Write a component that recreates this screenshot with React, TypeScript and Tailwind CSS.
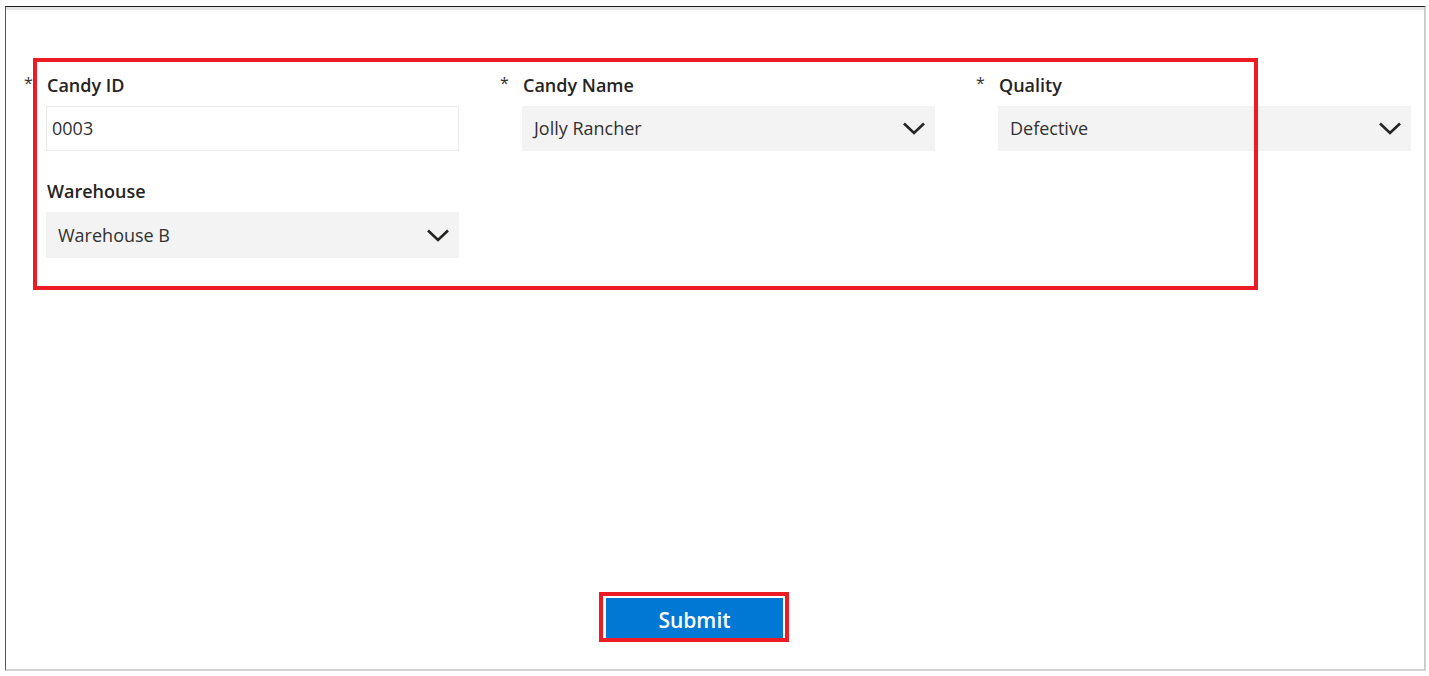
import { ReactNode } from "react";

function Chevron() {
  return (
    <svg width="22" height="13" viewBox="0 0 22 13" className="shrink-0">
      <polyline points="1,1.5 11,11 21,1.5" fill="none" stroke="#252423" strokeWidth="2.6" />
    </svg>
  );
}

function Field({ label, required, children }: { label: string; required?: boolean; children: ReactNode }) {
  return (
    <div className="flex flex-col">
      <div className="flex items-start h-[24px] mb-[9px]">
        <span className="w-[23px] text-[16px] leading-[20px] text-[#323130]">{required ? "*" : ""}</span>
        <span className="text-[18px] leading-[24px] font-semibold text-[#252423]">{label}</span>
      </div>
      <div className="ml-[22px] w-[413px]">{children}</div>
    </div>
  );
}

function Dropdown({ value, tall }: { value: string; tall?: boolean }) {
  return (
    <div
      className={`flex items-center justify-between bg-[#f3f3f3] pl-[12px] pr-[10px] ${tall ? "h-[46px]" : "h-[45px]"}`}
    >
      <span className="text-[18px] text-[#323130]">{value}</span>
      <Chevron />
    </div>
  );
}

export default function App() {
  return (
    <div className="w-[1429px] h-[676px] bg-white pt-[6px] pl-[5px] font-['Open_Sans',sans-serif]">
      <div className="relative w-[1421px] h-[665px] border-t border-l border-r-2 border-b-2 border-t-[#1e1e1e] border-l-[#555555] border-r-[#cccccc] border-b-[#d2d2d2]">
        <div className="h-[3px] bg-[#e6e6e6]" />

        <div className="pt-[63px] pl-[18px]">
          <div className="grid grid-cols-[435px_435px_435px] gap-x-[41px] gap-y-[28px]">
            <Field label="Candy ID" required>
              <div className="h-[45px] border border-[#ebebeb] bg-white flex items-center pl-[5px]">
                <span className="text-[18px] text-[#323130]">0003</span>
              </div>
            </Field>
            <Field label="Candy Name" required>
              <Dropdown value="Jolly Rancher" />
            </Field>
            <Field label="Quality" required>
              <Dropdown value="Defective" />
            </Field>
            <Field label="Warehouse">
              <Dropdown value="Warehouse B" tall />
            </Field>
          </div>
        </div>

        <div className="ml-[600px] mt-[340px]">
          <button className="w-[177px] h-[40px] pt-[5px] bg-[#0078d4] text-white text-[21px] font-semibold leading-none">
            Submit
          </button>
        </div>

        {/* annotation boxes drawn over the form */}
        <div className="pointer-events-none absolute left-[27px] top-[51px] w-[1225px] h-[232px] border-[4px] border-[#ed1c24]" />
        <div className="pointer-events-none absolute left-[593px] top-[585px] w-[190px] h-[50px] border-[4px] border-[#ed1c24]" />
      </div>
    </div>
  );
}
